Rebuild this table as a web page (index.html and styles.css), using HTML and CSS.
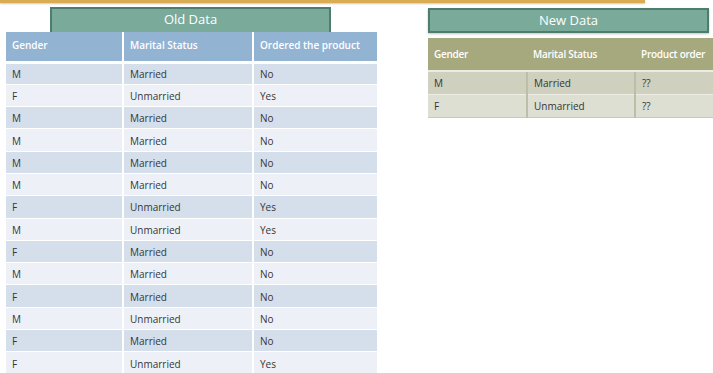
FILE: index.html
```html
<!DOCTYPE html>
<html>
<head>
<meta charset="utf-8">
<link rel="stylesheet" href="styles.css">
</head>
<body>
<div class="topline"></div>
<div class="page">
  <section class="left">
    <div class="title old-title">Old Data</div>
    <table class="tbl old">
      <thead>
        <tr><th class="c1">Gender</th><th class="c2">Marital Status</th><th class="c3">Ordered the product</th></tr>
      </thead>
      <tbody>
        <tr><td>M</td><td>Married</td><td>No</td></tr>
        <tr><td>F</td><td>Unmarried</td><td>Yes</td></tr>
        <tr><td>M</td><td>Married</td><td>No</td></tr>
        <tr><td>M</td><td>Married</td><td>No</td></tr>
        <tr><td>M</td><td>Married</td><td>No</td></tr>
        <tr><td>M</td><td>Married</td><td>No</td></tr>
        <tr><td>F</td><td>Unmarried</td><td>Yes</td></tr>
        <tr><td>M</td><td>Unmarried</td><td>Yes</td></tr>
        <tr><td>F</td><td>Married</td><td>No</td></tr>
        <tr><td>M</td><td>Married</td><td>No</td></tr>
        <tr><td>F</td><td>Married</td><td>No</td></tr>
        <tr><td>M</td><td>Unmarried</td><td>No</td></tr>
        <tr><td>F</td><td>Married</td><td>No</td></tr>
        <tr><td>F</td><td>Unmarried</td><td>Yes</td></tr>
      </tbody>
    </table>
  </section>
  <section class="right">
    <div class="title new-title">New Data</div>
    <table class="tbl new">
      <thead>
        <tr><th class="n1">Gender</th><th class="n2">Marital Status</th><th class="n3">Product order</th></tr>
      </thead>
      <tbody>
        <tr><td>M</td><td>Married</td><td>??</td></tr>
        <tr><td>F</td><td>Unmarried</td><td>??</td></tr>
      </tbody>
    </table>
  </section>
</div>
</body>
</html>
```
FILE: styles.css
```css
html, body {
  margin: 0;
  padding: 0;
  background: #ffffff;
  overflow: hidden;
}
body {
  width: 713px;
  height: 373px;
  font-family: "Open Sans", "Liberation Sans", sans-serif;
  color: #363636;
}
.topline {
  width: 645px;
  height: 3px;
  background: #d9ab52;
  box-shadow: 0 1px 2px #c8c8c8;
}
.page {
  display: flex;
  align-items: flex-start;
}
.left {
  width: 377px;
  flex: none;
  padding-left: 6px;
  padding-top: 4px;
  box-sizing: border-box;
}
.right {
  padding-left: 51px;
  padding-top: 5px;
}
.title {
  height: 25px;
  box-sizing: border-box;
  background: #7aaa99;
  border: 2px solid #4f7d6b;
  color: #ffffff;
  font-size: 13px;
  line-height: 21px;
  text-align: center;
}
.old-title {
  width: 281px;
  margin-left: 44px;
  border-bottom: none;
}
.new-title {
  width: 281px;
  box-shadow: 0 1px 2px #c4c4c4;
}
.tbl {
  border-collapse: collapse;
  table-layout: fixed;
  font-size: 10px;
}
.tbl th {
  color: #ffffff;
  font-weight: 600;
  text-align: left;
  padding: 0 0 0 6px;
  box-sizing: border-box;
  white-space: nowrap;
}
.tbl td {
  padding: 1px 0 0 6px;
  height: 22.3px;
  box-sizing: border-box;
  white-space: nowrap;
}
.old {
  width: 371px;
}
.old th {
  background: #93b3d3;
  height: 30px;
  padding-bottom: 2px;
  border-bottom: 3px solid #ffffff;
}
.old th + th, .old td + td {
  border-left: 2px solid #ffffff;
}
.old .c1 { width: 117px; }
.old .c2 { width: 130px; }
.old tbody tr {
  border-top: 1px solid #ffffff;
}
.old tbody tr:nth-child(odd) td { background: #d5dfeb; }
.old tbody tr:nth-child(even) td { background: #edf1f7; }

.new {
  margin-top: 5px;
  width: 300px;
}
.new th {
  background: #a6a87e;
  height: 33px;
  letter-spacing: -0.25px;
  border-bottom: 2px solid #ecece2;
}
.new .n1 { width: 99px; }
.new .n2 { width: 108px; }
.new td { height: 23px; }
.new td + td { border-left: 2px solid #bdbea8; }
.new tbody tr:nth-child(odd) td { background: #cfd0bd; }
.new tbody tr:nth-child(even) td { background: #dddfd2; border-top: 1px solid #eeeee6; }
.new tbody tr:last-child td { border-bottom: 1px solid #c9cab6; }
```
